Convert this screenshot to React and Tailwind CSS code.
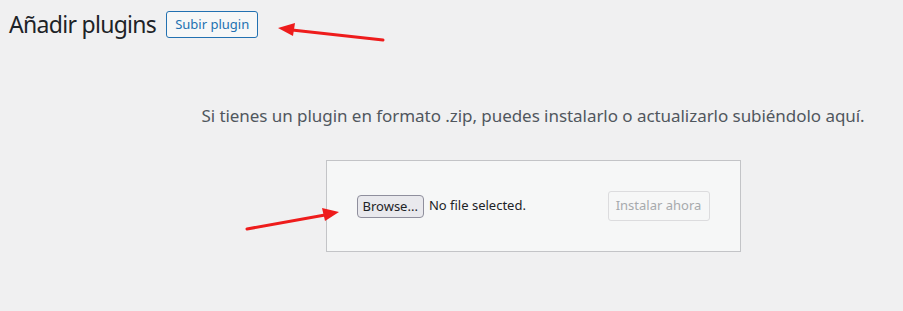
import React from "react";

export default function App() {
  return (
    <div
      className="relative w-[903px] h-[311px] overflow-hidden bg-[#f0f0f1] text-[#1d2327]"
      style={{ fontFamily: '"Segoe UI", "Noto Sans", "Open Sans", sans-serif' }}
    >
      {/* header */}
      <div className="flex items-center gap-[10px] pl-[9px] pt-[10px]">
        <h1 className="text-[23px] leading-[29px] font-normal tracking-[-0.7px]">Añadir plugins</h1>
        <button className="h-[27px] px-[8px] border border-[#2271b1] rounded-[3px] bg-[#f6f7f7] text-[#2271b1] text-[13px] leading-[25px]">
          Subir plugin
        </button>
      </div>

      {/* upload section */}
      <div className="flex flex-col items-center pl-[163px] pt-[65px]">
        <p className="text-[#50575e] text-[17px] leading-[24px] tracking-[-0.05px] text-center whitespace-nowrap">
          Si tienes un plugin en formato .zip, puedes instalarlo o actualizarlo subiéndolo aquí.
        </p>
        <div className="mt-[32px] w-[415px] h-[92px] border border-[#c3c4c7] bg-[#f6f7f7] p-[30px] flex items-center justify-between">
          <div className="flex items-center gap-[5px]">
            <button className="h-[23px] px-[5px] border border-[#8f8f9d] rounded-[4px] bg-[#e9e9ed] text-[13px] leading-[21px] text-[#1d2327]">
              Browse...
            </button>
            <span className="text-[13px] text-[#1d2327]">No file selected.</span>
          </div>
          <button className="h-[30px] w-[102px] border border-[#dcdcde] rounded-[3px] bg-[#f6f7f7] text-[#a7aaad] text-[13px]">
            Instalar ahora
          </button>
        </div>
      </div>

      {/* annotation arrows */}
      <svg className="absolute left-0 top-0 pointer-events-none" width="903" height="311">
        <line x1="383" y1="40" x2="292" y2="30" stroke="#ee1c1c" strokeWidth="3" strokeLinecap="round" />
        <polygon points="278,28 295,23 293,36" fill="#ee1c1c" />
        <line x1="247" y1="229" x2="325" y2="215" stroke="#ee1c1c" strokeWidth="3" strokeLinecap="round" />
        <polygon points="339,212 322,208 325,221" fill="#ee1c1c" />
      </svg>
    </div>
  );
}
